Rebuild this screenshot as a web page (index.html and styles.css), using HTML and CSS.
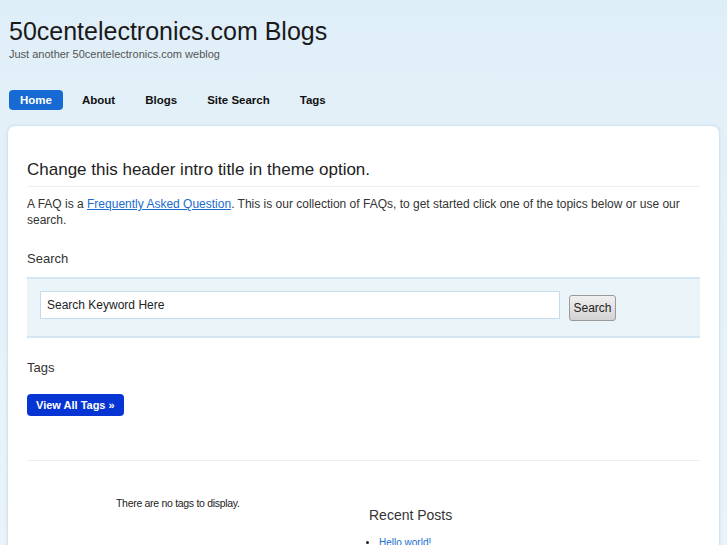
FILE: index.html
```html
<!DOCTYPE html>
<html>
<head>
<meta charset="utf-8">
<link rel="stylesheet" href="styles.css">
</head>
<body>
<div class="header">
  <h1 class="site-title">50centelectronics.com Blogs</h1>
  <div class="tagline">Just another 50centelectronics.com weblog</div>
</div>
<ul class="nav">
  <li><a class="active" href="#">Home</a></li>
  <li><a href="#">About</a></li>
  <li><a href="#">Blogs</a></li>
  <li><a href="#">Site Search</a></li>
  <li><a href="#">Tags</a></li>
</ul>
<div class="card">
  <h2 class="intro-title">Change this header intro title in theme option.</h2>
  <p class="intro">A FAQ is a <a href="#">Frequently Asked Question</a>. This is our collection of FAQs, to get started click one of the topics below or use our search.</p>
  <h3 class="section-title">Search</h3>
  <div class="searchbar">
    <input class="search-input" type="text" value="Search Keyword Here">
    <button class="search-btn">Search</button>
  </div>
  <h3 class="section-title tags-title">Tags</h3>
  <a class="view-tags" href="#">View All Tags »</a>
  <div class="divider"></div>
  <div class="columns">
    <div class="col-left">There are no tags to display.</div>
    <div class="col-right">
      <h4 class="recent-title">Recent Posts</h4>
      <ul class="recent">
        <li><a href="#">Hello world!</a></li>
      </ul>
    </div>
  </div>
</div>
</body>
</html>
```
FILE: styles.css
```css
html, body {
  margin: 0;
  padding: 0;
}
body {
  background: linear-gradient(#deeef8 0px, #e3f0f8 120px, #e9f3f9 545px);
  font-family: "Liberation Sans", Arial, sans-serif;
  color: #222;
  height: 545px;
  overflow: hidden;
}
.header {
  padding: 16px 0 0 9px;
}
.site-title {
  margin: 0;
  font-size: 25px;
  font-weight: normal;
  color: #1a1a1a;
  line-height: 30px;
}
.tagline {
  font-size: 11px;
  color: #555;
  margin-top: 1px;
  line-height: 14px;
}
.nav {
  list-style: none;
  margin: 29px 0 0 0;
  padding: 0 0 0 9px;
  display: flex;
  gap: 8px;
}
.nav li a {
  display: block;
  font-size: 11.5px;
  font-weight: bold;
  color: #111;
  text-decoration: none;
  padding: 4px 11px;
  line-height: 12px;
  border-radius: 4px;
}
.nav li a.active {
  background: #1769d3;
  color: #fff;
}
.card {
  margin: 15px 7px 0 7px;
  background: #fff;
  border: 1px solid #d2e4f0;
  border-radius: 8px;
  box-shadow: 0 0 3px #cfe3f1;
  padding: 32px 19px 40px 19px;
  height: 500px;
}
.intro-title {
  margin: 0;
  font-size: 17px;
  font-weight: normal;
  color: #222;
  line-height: 24px;
  padding-bottom: 4px;
  border-bottom: 1px solid #eeeeee;
}
.intro {
  margin: 9px 0 0 0;
  font-size: 12px;
  line-height: 16px;
  color: #333;
}
.intro a {
  color: #1a6ccf;
}
.section-title {
  margin: 23px 0 0 0;
  font-size: 13px;
  font-weight: normal;
  color: #333;
  line-height: 16px;
}
.searchbar {
  margin-top: 10px;
  background: #ebf4f9;
  border-top: 2px solid #d3e6f1;
  border-bottom: 2px solid #d3e6f1;
  padding: 12px 13px 15px 13px;
  display: flex;
  align-items: flex-start;
  gap: 9px;
}
.search-input {
  flex: 0 0 520px;
  height: 28px;
  box-sizing: border-box;
  border: 1px solid #c6dceb;
  padding: 0 6px;
  font-family: "Liberation Sans", Arial, sans-serif;
  font-size: 12px;
  color: #222;
  margin: 0;
}
.search-btn {
  margin-top: 4px;
  height: 26px;
  width: 47px;
  padding: 0;
  font-family: "Liberation Sans", Arial, sans-serif;
  font-size: 12px;
  color: #222;
  border: 1px solid #9a9a9a;
  border-radius: 3px;
  background: linear-gradient(#f0f0f0, #d2d2d2);
}
.tags-title {
  margin-top: 22px;
}
.view-tags {
  display: inline-block;
  margin-top: 18px;
  background: #0735d3;
  color: #fff;
  font-size: 11px;
  font-weight: bold;
  text-decoration: none;
  padding: 5px 9px;
  line-height: 12px;
  border-radius: 4px;
}
.divider {
  margin-top: 44px;
  border-top: 1px solid #eeeeee;
}
.columns {
  display: flex;
}
.col-left {
  width: 342px;
  box-sizing: border-box;
  padding-left: 89px;
  padding-top: 36px;
  font-size: 10.5px;
  color: #222;
  letter-spacing: -0.3px;
}
.col-right {
  padding-top: 45px;
}
.recent-title {
  margin: 0;
  font-size: 14px;
  font-weight: normal;
  color: #333;
  line-height: 18px;
}
.recent {
  margin: 13px 0 0 0;
  padding-left: 10px;
  font-size: 10px;
}
.recent a {
  color: #1a6ccf;
}
```
